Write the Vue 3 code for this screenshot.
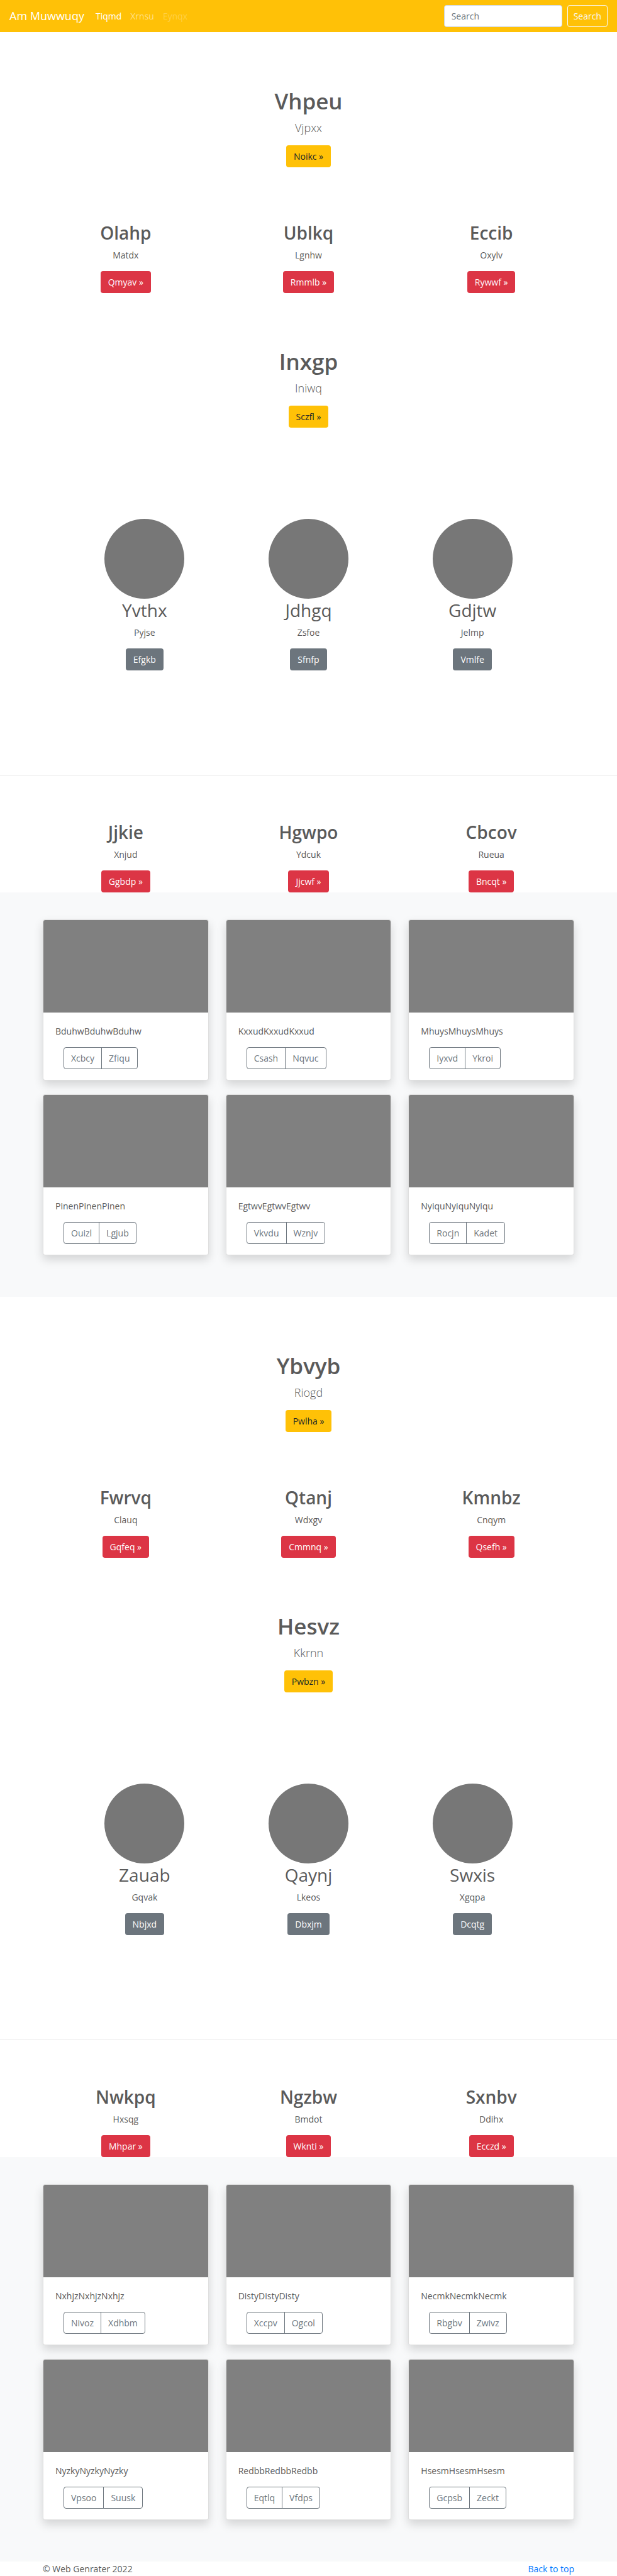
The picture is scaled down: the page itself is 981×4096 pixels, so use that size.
<script setup>
const halves = [
  {
    lead: { title: 'Vhpeu', text: 'Vjpxx', action: 'Noikc »' },
    features: [
      { title: 'Olahp', text: 'Matdx', action: 'Qmyav »' },
      { title: 'Ublkq', text: 'Lgnhw', action: 'Rmmlb »' },
      { title: 'Eccib', text: 'Oxylv', action: 'Rywwf »' },
    ],
    second: { title: 'Inxgp', text: 'Iniwq', action: 'Sczfl »' },
    people: [
      { title: 'Yvthx', text: 'Pyjse', action: 'Efgkb' },
      { title: 'Jdhgq', text: 'Zsfoe', action: 'Sfnfp' },
      { title: 'Gdjtw', text: 'Jelmp', action: 'Vmlfe' },
    ],
    closing: [
      { title: 'Jjkie', text: 'Xnjud', action: 'Ggbdp »' },
      { title: 'Hgwpo', text: 'Ydcuk', action: 'Jjcwf »' },
      { title: 'Cbcov', text: 'Rueua', action: 'Bncqt »' },
    ],
    cards: [
      { text: 'BduhwBduhwBduhw', actions: ['Xcbcy', 'Zfiqu'] },
      { text: 'KxxudKxxudKxxud', actions: ['Csash', 'Nqvuc'] },
      { text: 'MhuysMhuysMhuys', actions: ['Iyxvd', 'Ykroi'] },
      { text: 'PinenPinenPinen', actions: ['Ouizl', 'Lgjub'] },
      { text: 'EgtwvEgtwvEgtwv', actions: ['Vkvdu', 'Wznjv'] },
      { text: 'NyiquNyiquNyiqu', actions: ['Rocjn', 'Kadet'] },
    ],
  },
  {
    lead: { title: 'Ybvyb', text: 'Riogd', action: 'Pwlha »' },
    features: [
      { title: 'Fwrvq', text: 'Clauq', action: 'Gqfeq »' },
      { title: 'Qtanj', text: 'Wdxgv', action: 'Cmmnq »' },
      { title: 'Kmnbz', text: 'Cnqym', action: 'Qsefh »' },
    ],
    second: { title: 'Hesvz', text: 'Kkrnn', action: 'Pwbzn »' },
    people: [
      { title: 'Zauab', text: 'Gqvak', action: 'Nbjxd' },
      { title: 'Qaynj', text: 'Lkeos', action: 'Dbxjm' },
      { title: 'Swxis', text: 'Xgqpa', action: 'Dcqtg' },
    ],
    closing: [
      { title: 'Nwkpq', text: 'Hxsqg', action: 'Mhpar »' },
      { title: 'Ngzbw', text: 'Bmdot', action: 'Wknti »' },
      { title: 'Sxnbv', text: 'Ddihx', action: 'Ecczd »' },
    ],
    cards: [
      { text: 'NxhjzNxhjzNxhjz', actions: ['Nivoz', 'Xdhbm'] },
      { text: 'DistyDistyDisty', actions: ['Xccpv', 'Ogcol'] },
      { text: 'NecmkNecmkNecmk', actions: ['Rbgbv', 'Zwivz'] },
      { text: 'NyzkyNyzkyNyzky', actions: ['Vpsoo', 'Suusk'] },
      { text: 'RedbbRedbbRedbb', actions: ['Eqtlq', 'Vfdps'] },
      { text: 'HsesmHsesmHsesm', actions: ['Gcpsb', 'Zeckt'] },
    ],
  },
]
</script>

<template>
  <div id="top" class="page">
    <header class="navbar">
      <a class="brand" href="#">Am Muwwuqy</a>
      <nav class="links">
        <a class="link active" href="#">Tiqmd</a>
        <a class="link" href="#">Xrnsu</a>
        <a class="link disabled" href="#">Eynqx</a>
      </nav>
      <form class="search" role="search" @submit.prevent>
        <input class="field" type="search" placeholder="Search" aria-label="Search" />
        <button class="btn outline-light" type="submit">Search</button>
      </form>
    </header>

    <main>
      <section v-for="half in halves" :key="half.lead.title">
        <div class="block hero first">
          <h1>{{ half.lead.title }}</h1>
          <p>{{ half.lead.text }}</p>
          <a class="btn warning" href="#">{{ half.lead.action }}</a>
        </div>

        <div class="features spaced">
          <div v-for="item in half.features" :key="item.title" class="block">
            <h2>{{ item.title }}</h2>
            <p>{{ item.text }}</p>
            <a class="btn danger" href="#">{{ item.action }}</a>
          </div>
        </div>

        <div class="block hero spaced">
          <h1>{{ half.second.title }}</h1>
          <p>{{ half.second.text }}</p>
          <a class="btn warning" href="#">{{ half.second.action }}</a>
        </div>

        <div class="people">
          <div v-for="item in half.people" :key="item.title" class="block light">
            <div class="avatar"></div>
            <h2>{{ item.title }}</h2>
            <p>{{ item.text }}</p>
            <a class="btn secondary" href="#">{{ item.action }}</a>
          </div>
        </div>

        <hr class="divider" />

        <div class="features">
          <div v-for="item in half.closing" :key="item.title" class="block">
            <h2>{{ item.title }}</h2>
            <p>{{ item.text }}</p>
            <a class="btn danger" href="#">{{ item.action }}</a>
          </div>
        </div>

        <div class="album">
          <div class="cards">
            <article v-for="card in half.cards" :key="card.text" class="card">
              <div class="thumb"></div>
              <div class="body">
                <p>{{ card.text }}</p>
                <div class="group">
                  <button v-for="label in card.actions" :key="label" class="btn outline" type="button">{{ label }}</button>
                </div>
              </div>
            </article>
          </div>
        </div>
      </section>
    </main>

    <footer class="footer">
      <span>© Web Genrater 2022</span>
      <a href="#top">Back to top</a>
    </footer>
  </div>
</template>

<style>
body {
  margin: 0;
  background: #fff;
}
</style>

<style scoped>
.page,
.page * {
  box-sizing: border-box;
}

.page {
  color: #5a5a5a;
  font-family: "Segoe UI", "Open Sans", "Noto Sans", sans-serif;
  font-size: 14px;
  line-height: 23px;
}

h1,
h2,
p {
  margin: 0;
}

a {
  color: #007bff;
  text-decoration: none;
}

.navbar {
  display: flex;
  align-items: center;
  padding: 8px 15px;
  background: #ffc107;
}

.brand {
  margin-right: 11px;
  color: #fff;
  font-size: 18px;
  line-height: 29px;
}

.links {
  display: flex;
}

.link {
  padding: 0 7px;
  color: rgba(255, 255, 255, 0.5);
}

.link.active {
  color: #fff;
}

.link.disabled {
  color: rgba(255, 255, 255, 0.25);
}

.search {
  display: flex;
  gap: 8px;
  margin-left: auto;
}

.field {
  width: 188px;
  height: 35px;
  padding: 5px 11px;
  border: 1px solid #ced4da;
  border-radius: 4px;
  background: #fff;
  color: #495057;
  font: inherit;
  appearance: none;
}

.field::placeholder {
  color: #6c757d;
  opacity: 1;
}

.btn {
  display: inline-block;
  padding: 6px 11px;
  border: 1px solid transparent;
  border-radius: 4px;
  background: transparent;
  font: inherit;
  line-height: 21px;
  text-align: center;
  cursor: pointer;
}

.outline-light {
  padding: 6px 9px;
  border-color: #f8f9fa;
  color: #f8f9fa;
}

.warning {
  background: #ffc107;
  color: #212529;
}

.danger {
  background: #dc3545;
  color: #fff;
}

.secondary {
  background: #6c757d;
  color: #fff;
}

.outline {
  border-color: #6c757d;
  color: #6c757d;
}

.block {
  display: flex;
  flex-direction: column;
  align-items: center;
}

h1 {
  margin-bottom: 5px;
  font-size: 35px;
  font-weight: 600;
  line-height: 46px;
}

h2 {
  margin-bottom: 5px;
  font-size: 28px;
  font-weight: 600;
  line-height: 37px;
}

.block p {
  margin-bottom: 14px;
}

.block.hero p {
  margin-bottom: 13px;
  font-size: 18px;
  font-weight: 300;
  line-height: 29px;
}

.light h2 {
  font-weight: 400;
}

.first {
  padding-top: 87px;
}

.features,
.people,
.cards {
  display: grid;
  grid-template-columns: repeat(3, 1fr);
  margin: 0 auto;
}

.features {
  max-width: 872px;
}

.spaced {
  padding-top: 86px;
}

.people {
  max-width: 782px;
  padding: 145px 0 166px;
}

.avatar {
  width: 127px;
  height: 127px;
  border-radius: 50%;
  background: #777;
}

.divider {
  height: 1px;
  margin: 0 0 72px;
  border: 0;
  background: #e5e5e5;
}

.album {
  padding: 43px 0 66px;
  background: #f8f9fa;
}

.cards {
  max-width: 845px;
  gap: 22px 27px;
}

.card {
  border: 1px solid rgba(0, 0, 0, 0.125);
  border-radius: 4px;
  background: #fff;
  box-shadow: 0 7px 15px rgba(0, 0, 0, 0.15);
}

.thumb {
  height: 147px;
  border-radius: 3px 3px 0 0;
  background: #808080;
}

.body {
  padding: 18px 19px 17px;
}

.body p {
  margin-bottom: 14px;
}

.group {
  display: flex;
  margin-left: 13px;
}

.group .btn:first-child {
  border-radius: 4px 0 0 4px;
}

.group .btn:last-child {
  margin-left: -1px;
  border-radius: 0 4px 4px 0;
}

.footer {
  display: flex;
  justify-content: space-between;
  max-width: 845px;
  margin: 0 auto;
}
</style>
